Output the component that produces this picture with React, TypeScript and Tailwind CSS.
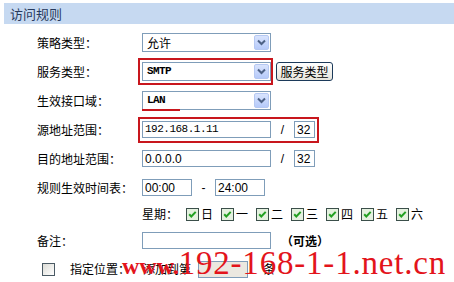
import React from 'react'

const days = ['日', '一', '二', '三', '四', '五', '六']

function Arrow() {
  return (
    <div className="flex h-[15px] w-[15px] items-center justify-center rounded-[2px] border border-[#b5c8f2] bg-gradient-to-b from-[#d9e4fd] to-[#b6cafa]">
      <svg width="9" height="7" viewBox="0 0 9 7">
        <path d="M1 1.5l3.5 3.5 3.5-3.5" stroke="#4d6185" strokeWidth="2" fill="none" />
      </svg>
    </div>
  )
}

function Select({ value, latin }: { value: string; latin?: boolean }) {
  return (
    <div className="flex h-[19px] w-[129px] items-center border border-[#7f9db9] bg-white pl-[4px] pr-[1px]">
      <span
        className={
          latin
            ? "flex-1 font-['Liberation_Mono',monospace] text-[11px] font-bold tracking-[-0.6px] text-black"
            : 'flex-1 text-[12px] text-black'
        }
      >
        {value}
      </span>
      <Arrow />
    </div>
  )
}

function Input({ value, w, mono, gray }: { value?: string; w: string; mono?: boolean; gray?: boolean }) {
  return (
    <div
      className={`flex h-[17px] items-center border border-[#7f9db9] pl-[2px] ${w} ${gray ? 'bg-[#ebe8e0]' : 'bg-white'}`}
    >
      <span
        className={
          mono
            ? "font-['Liberation_Mono',monospace] text-[11px] tracking-[-0.5px] text-black"
            : "font-['Liberation_Sans',sans-serif] text-[12px] text-black"
        }
      >
        {value}
      </span>
    </div>
  )
}

function Check() {
  return (
    <svg width="13" height="13" viewBox="0 0 13 13">
      <rect x="0.5" y="0.5" width="12" height="12" fill="#e4f1df" stroke="#3b4f4a" />
      <path d="M3.2 6.3l2.1 2.2 4.4-4.6" stroke="#22a022" strokeWidth="2" fill="none" />
    </svg>
  )
}

function Row({ label, h = 'h-[29px]', children }: { label: string; h?: string; children?: React.ReactNode }) {
  return (
    <div className={`flex items-center ${h}`}>
      <span className="w-[142px] shrink-0 whitespace-nowrap pl-[37px] text-[12px] text-black">{label}</span>
      <div className="flex items-center">{children}</div>
    </div>
  )
}

export default function App() {
  return (
    <div className="relative h-[282px] w-[454px] overflow-hidden bg-white pt-[3px] font-['Noto_Sans_CJK_SC',sans-serif]">
      <div className="ml-[4px] flex h-[21px] items-center bg-[#c6d9f1] pl-[6px] text-[13px] text-[#283a5c]">
        访问规则
      </div>
      <div className="mt-[4px]">
        <Row label="策略类型：">
          <Select value="允许" />
        </Row>
        <Row label="服务类型：">
          <div className="-ml-[4px] border-2 border-[#c8161d] py-[2px] pl-[2px]">
            <Select value="SMTP" latin />
          </div>
          <button className="ml-[3px] flex h-[19px] w-[57px] items-center justify-center rounded-[3px] border border-[#1c3a5a] bg-gradient-to-b from-white to-[#e6e4dc] text-[12px] text-black">
            服务类型
          </button>
        </Row>
        <Row label="生效接口域：">
          <div className="relative">
            <Select value="LAN" latin />
            <div className="absolute -bottom-[1px] left-0 h-[2px] w-[38px] bg-[#c8161d]" />
          </div>
        </Row>
        <Row label="源地址范围：">
          <div className="-ml-[4px] flex items-center border-2 border-[#c8161d] py-[2px] pl-[2px] pr-[2px]">
            <Input value="192.168.1.11" w="w-[129px]" mono />
            <span className="w-[23px] text-center font-['Liberation_Sans',sans-serif] text-[12px] text-black">/</span>
            <Input value="32" w="w-[21px]" />
          </div>
        </Row>
        <Row label="目的地址范围：">
          <Input value="0.0.0.0" w="w-[129px]" />
          <span className="w-[23px] text-center font-['Liberation_Sans',sans-serif] text-[12px] text-black">/</span>
          <Input value="32" w="w-[21px]" />
        </Row>
        <Row label="规则生效时间表：">
          <Input value="00:00" w="w-[50px]" />
          <span className="w-[23px] text-center font-['Liberation_Sans',sans-serif] text-[12px] text-black">-</span>
          <Input value="24:00" w="w-[50px]" />
        </Row>
        <Row label="" h="h-[24px]">
          <span className="w-[44px] text-[12px] text-black">星期：</span>
          <div className="flex items-center gap-[7px]">
            {days.map((d) => (
              <div key={d} className="flex w-[28px] items-center gap-[2px]">
                <Check />
                <span className="text-[12px] leading-none text-black">{d}</span>
              </div>
            ))}
          </div>
        </Row>
        <Row label="备注：">
          <Input w="w-[129px]" />
          <span className="ml-[10px] text-[12px] font-bold text-black">（可选）</span>
        </Row>
        <div className="flex h-[28px] items-center pl-[42px]">
          <div className="h-[13px] w-[13px] border border-[#4a5a64] bg-gradient-to-br from-[#dcdcd6] to-white" />
          <span className="ml-[15px] w-[73px] whitespace-nowrap text-[12px] text-black">指定位置：</span>
          <span className="w-[55px] whitespace-nowrap text-[12px] text-black">添加到第</span>
          <Input w="w-[50px]" gray />
          <span className="ml-[15px] text-[12px] text-black">条</span>
        </div>
      </div>
      <div className="pointer-events-none absolute left-[122px] top-[247px] flex items-baseline whitespace-nowrap font-['Liberation_Serif',serif] text-[#e3141b] leading-none">
        <span className="text-[24px] font-bold">www.</span>
        <span className="text-[33px] tracking-[0.8px]">192-168-1-1.net.cn</span>
      </div>
    </div>
  )
}
